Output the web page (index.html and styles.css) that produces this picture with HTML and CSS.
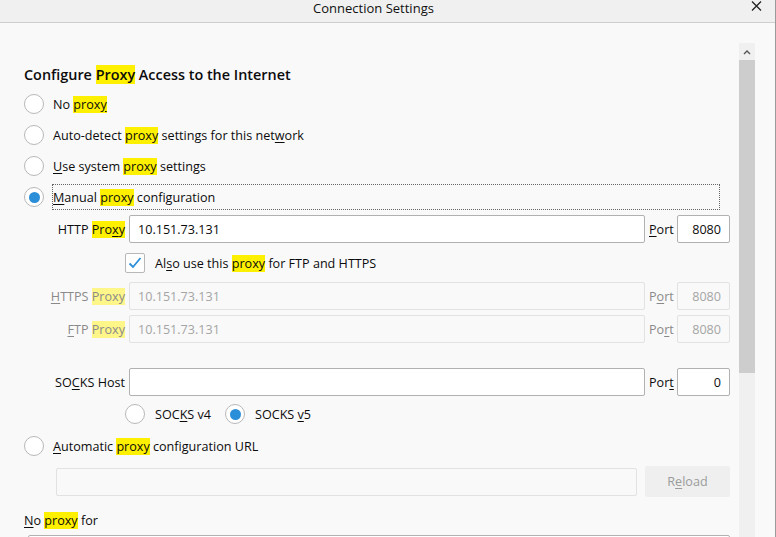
FILE: index.html
```html
<!DOCTYPE html>
<html>
<head>
<meta charset="utf-8">
<link rel="stylesheet" href="styles.css">
</head>
<body>
<div class="window">
  <div class="titlebar">
    <div class="title">Connection Settings</div>
    <svg class="close" width="11" height="10" viewBox="0 0 11 10"><path d="M1 0.5 L10 9.5 M10 0.5 L1 9.5" stroke="#222" stroke-width="1.3" fill="none"/></svg>
  </div>
  <div class="main">
    <div class="content">
      <h1 class="heading">Configure <span class="hl">Proxy</span> Access to the Internet</h1>

      <div class="radio-row first"><span class="radio"></span><span class="lbl">No <span class="hl">prox<u>y</u></span></span></div>
      <div class="radio-row"><span class="radio"></span><span class="lbl">Auto-detect <span class="hl">proxy</span> settings for this net<u>w</u>ork</span></div>
      <div class="radio-row"><span class="radio"></span><span class="lbl"><u>U</u>se system <span class="hl">proxy</span> settings</span></div>
      <div class="radio-row"><span class="radio checked"></span><span class="focus"><span class="lbl-in"><u>M</u>anual <span class="hl">proxy</span> configuration</span></span></div>

      <div class="grid http">
        <span class="flabel">HTTP <span class="hl">Pro<u>x</u>y</span></span>
        <span class="input">10.151.73.131</span>
        <span class="plabel"><u>P</u>ort</span>
        <span class="input port">8080</span>
      </div>

      <div class="check-row"><span class="checkbox"><svg width="14" height="12" viewBox="0 0 14 12"><path d="M1.5 6.5 L5 10 L12.5 1" stroke="#2a8ed8" stroke-width="1.8" fill="none"/></svg></span><span class="lbl">Al<u>s</u>o use this <span class="hl">proxy</span> for FTP and HTTPS</span></div>

      <div class="grid dis https">
        <span class="flabel"><u>H</u>TTPS <span class="hl">Proxy</span></span>
        <span class="input">10.151.73.131</span>
        <span class="plabel">P<u>o</u>rt</span>
        <span class="input port">8080</span>
      </div>

      <div class="grid dis ftp">
        <span class="flabel"><u>F</u>TP <span class="hl">Proxy</span></span>
        <span class="input">10.151.73.131</span>
        <span class="plabel">Po<u>r</u>t</span>
        <span class="input port">8080</span>
      </div>

      <div class="grid socks">
        <span class="flabel">SO<u>C</u>KS Host</span>
        <span class="input"></span>
        <span class="plabel">Por<u>t</u></span>
        <span class="input port">0</span>
      </div>

      <div class="socks-row">
        <div class="sub-radio v4"><span class="radio"></span><span class="lbl">SOC<u>K</u>S v4</span></div>
        <div class="sub-radio"><span class="radio checked"></span><span class="lbl">SOCKS <u>v</u>5</span></div>
      </div>

      <div class="radio-row auto"><span class="radio"></span><span class="lbl"><u>A</u>utomatic <span class="hl">proxy</span> configuration URL</span></div>

      <div class="url-row">
        <span class="input url"></span>
        <span class="button">R<u>e</u>load</span>
      </div>

      <div class="noproxy"><u>N</u>o <span class="hl">proxy</span> for</div>
      <div class="bottom-input"></div>
    </div>
    <div class="scrollbar">
      <div class="sb-up"><svg width="8" height="6" viewBox="0 0 8 6"><path d="M1 5 L4 2 L7 5" stroke="#555" stroke-width="1.4" fill="none"/></svg></div>
      <div class="sb-thumb"></div>
      <div class="sb-track"></div>
    </div>
    <div class="sidepad"></div>
  </div>
</div>
</body>
</html>
```

FILE: styles.css
```css
* { box-sizing: border-box; }
html, body { margin: 0; padding: 0; }
body {
  width: 776px;
  height: 537px;
  overflow: hidden;
  font-family: "Open Sans", "Noto Sans", sans-serif;
  font-size: 12.6px;
  color: #0c0c0d;
  background: #f9f9f9;
}
u { text-decoration: underline; text-underline-offset: 2px; }
.window {
  height: 537px;
  border-right: 1px solid #9a9a9a;
  display: flex;
  flex-direction: column;
}
.titlebar {
  height: 23px;
  flex: none;
  background: #f0f0f0;
  border-bottom: 1px solid #cfcfcf;
  display: flex;
  align-items: flex-start;
  position: relative;
}
.title {
  flex: 1;
  text-align: center;
  padding-right: 28px;
  padding-top: 0;
  font-size: 13px;
  line-height: 16px;
  color: #111;
}
.close { position: absolute; right: 13px; top: 1px; }
.main { flex: 1; display: flex; min-height: 0; }
.content {
  width: 739px;
  padding: 41px 0 0 24px;
}
.scrollbar {
  width: 16px;
  margin-top: 20px;
  display: flex;
  flex-direction: column;
  background: #f0f0f0;
}
.sb-up { height: 17px; display: flex; align-items: center; justify-content: center; }
.sb-thumb { height: 313px; background: #cdcdcd; }
.sb-track { flex: 1; }
.sidepad { width: 20px; }

.hl { background: #fff000; }
.heading {
  margin: 0;
  font-size: 14.4px;
  font-weight: 600;
  line-height: 22px;
  height: 22px;
}
.radio-row {
  height: 26px;
  display: flex;
  align-items: center;
  margin-top: 5px;
}
.radio-row.first { margin-top: 5px; }
.radio {
  width: 20px; height: 20px;
  border: 1px solid #b8b8b8;
  border-radius: 50%;
  background: #fff;
  flex: none;
  display: flex; align-items: center; justify-content: center;
}
.radio.checked::after {
  content: "";
  width: 11px; height: 11px;
  border-radius: 50%;
  background: #2a8ed8;
}
.lbl { margin-left: 9px; white-space: nowrap; }
.focus {
  flex: none;
  width: 668px;
  height: 26px;
  margin-left: 8px;
  border: 1px dotted #666;
  display: flex;
  align-items: center;
}
.lbl-in { white-space: nowrap; }
.grid {
  display: grid;
  grid-template-columns: 101px 516px 24px 53px;
  column-gap: 4px;
  align-items: center;
  height: 28px;
}
.grid.http { margin-top: 5px; }
.grid.https { margin-top: 6px; }
.grid.ftp { margin-top: 5px; }
.grid.socks { margin-top: 25px; }
.flabel { text-align: right; white-space: nowrap; }
.plabel { white-space: nowrap; }
.input {
  height: 28px;
  border: 1px solid #b1b1b1;
  border-radius: 2px;
  background: #fff;
  padding: 0 8px;
  display: flex;
  align-items: center;
}
.input.port { justify-content: flex-end; }
.dis { color: #8a8a8a; }
.dis .hl { background: #fff68a; }
.dis .input { background: #f9f9f9; border-color: #e2e2e2; color: #a5a5a5; }
.check-row {
  height: 26px;
  margin-top: 7px;
  padding-left: 101px;
  display: flex;
  align-items: center;
}
.checkbox {
  width: 20px; height: 20px;
  border: 1px solid #b8b8b8;
  border-radius: 2px;
  background: #fff;
  display: flex; align-items: center; justify-content: center;
}
.check-row .lbl { margin-left: 10px; }
.socks-row {
  height: 26px;
  margin-top: 5px;
  padding-left: 101px;
  display: flex;
  align-items: center;
}
.sub-radio { display: flex; align-items: center; }
.sub-radio.v4 { width: 100px; }
.sub-radio .lbl { margin-left: 10px; }
.radio-row.auto { margin-top: 6px; }
.url-row {
  margin-top: 7px;
  padding-left: 32px;
  display: flex;
  align-items: center;
  gap: 8px;
  height: 31px;
}
.input.url {
  width: 581px;
  background: #f9f9f9;
  border-color: #e2e2e2;
}
.button {
  width: 85px;
  height: 31px;
  background: #efefef;
  border-radius: 2px;
  color: #9b9b9b;
  display: flex; align-items: center; justify-content: center;
}
.noproxy {
  margin-top: 14px;
  line-height: 20px;
  height: 20px;
}
.bottom-input {
  margin-top: 4px;
  margin-left: 4px;
  width: 702px;
  height: 28px;
  border: 1px solid #b1b1b1;
  border-radius: 2px;
  background: #fff;
}
```
